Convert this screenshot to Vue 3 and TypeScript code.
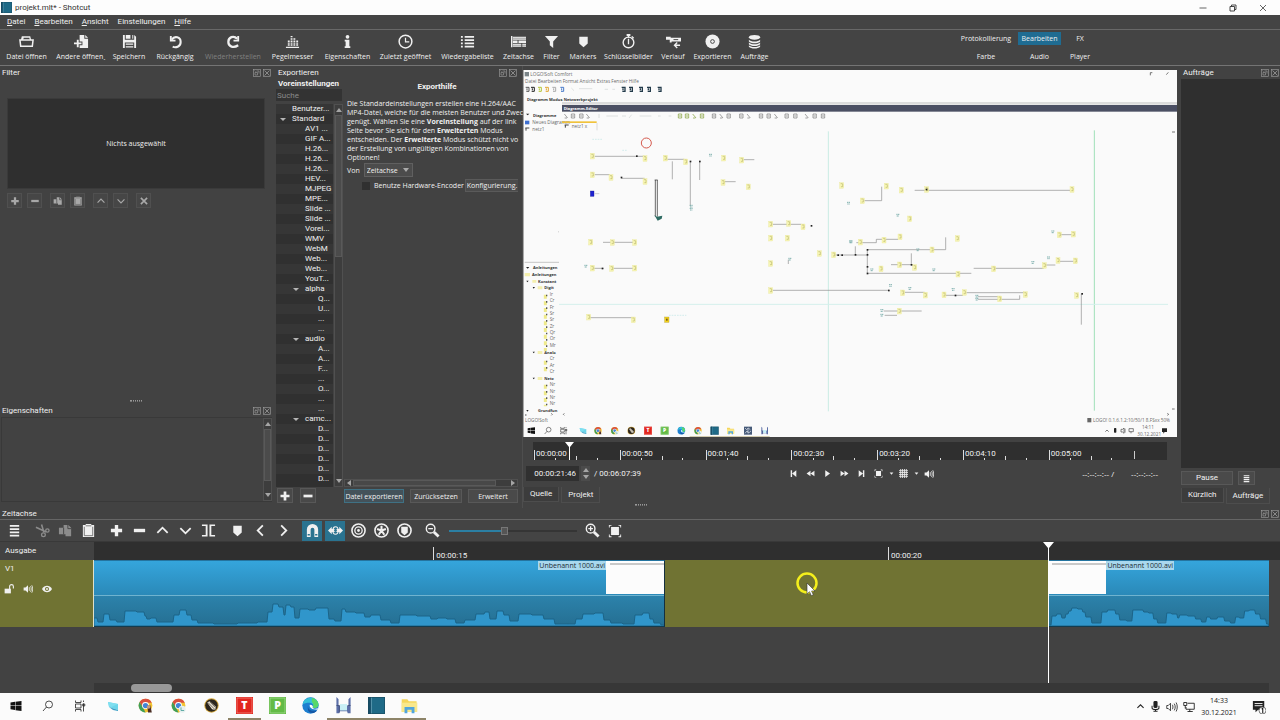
<script setup lang="ts">
import { h, ref } from 'vue'

type Shape = [kind: 'box' | 'faint' | 'line' | 'dot' | 'label', ...nums: number[]]

const glyphs: Record<string, string> = {
  open: '<path d="M3 2.500h9l1 4h-1.500l-.5-2.500H5L4.500 6.500H2z"/><path d="M1 6.500h14l-.8 6.500H1.800z" fill="none" stroke="currentColor" stroke-width="1.600"/>',
  openOther: '<path d="M6 1h5v4h4v10H6v-3h3V8H6z"/><path d="M12 1l3 3h-3z"/><path d="M0 9h3V6h2v3h3v2H5v3H3v-3H0z"/>',
  save: '<path d="M1 1h2v5h10V1l2 2v12h-2V9H3v6H1zM4 1h5v4H4zM11 1h1v4h-1zM4 10h8v1.500H4zM4 13h8v1.500H4z"/>',
  undo: '<path d="M3 2v5h5" fill="none" stroke="currentColor" stroke-width="2"/><path d="M4 6C7 1.500 13.500 3 13.500 8.500S8 15 5 13.500" fill="none" stroke="currentColor" stroke-width="2.200"/>',
  redo: '<path d="M13 2v5H8" fill="none" stroke="currentColor" stroke-width="2"/><path d="M12 5C8 1 2.500 3.500 2.500 8.500S8 15.500 13 12" fill="none" stroke="currentColor" stroke-width="2.400"/>',
  meter: '<path d="M3 7h2v1.500H3zM3 9h2v1.500H3zM3 11h2v1.500H3zM6 2h2v1.500H6zM6 4.500h2V6H6zM6 7h2v1.500H6zM6 9h2v1.500H6zM6 11h2v1.500H6zM9 4.500h2V6H9zM9 7h2v1.500H9zM9 9h2v1.500H9zM9 11h2v1.500H9zM12 7h2v1.500h-2zM12 9h2v1.500h-2zM12 11h2v1.500h-2zM1 13.500h14V15H1z"/>',
  info: '<circle cx="8" cy="3" r="2"/><path d="M5 6h5v7h1v2H5v-2h1V8H5z"/>',
  clock: '<circle cx="8" cy="8" r="6.800" fill="none" stroke="currentColor" stroke-width="1.600"/><path d="M8 4v4.500h4" fill="none" stroke="currentColor" stroke-width="1.300"/>',
  list: '<path d="M1 2h2v2H1zM5 2h10v2H5zM1 5.500h2v2H1zM5 5.500h10v2H5zM1 9h2v2H1zM5 9h10v2H5zM1 12.500h2v2H1zM5 12.500h10v2H5z"/>',
  timeline: '<path d="M0 2h1.500v12H0zM2 3h14v3H2zM2 7h5v2.500H2zM8 7h8v2.500H8zM2 10.500h9v3H2zM12 10.500h4v3h-4z"/><path d="M2 4.500h14M2 12h14" stroke="#444" stroke-width=".5"/>',
  filter: '<path d="M1 2h14L9.800 8v7L6.200 12V8z"/>',
  marker: '<path d="M3.500 3h9v7L8 14 3.500 10z"/>',
  stopwatch: '<circle cx="8" cy="9" r="5.700" fill="none" stroke="currentColor" stroke-width="1.500"/><path d="M6 0h4v2H6zM7.300 2h1.400v2H7.300zM12 2l2 2-1 1-2-2zM7.300 5h1.400v6H7.300z"/>',
  history: '<path d="M0 3h5v1h11v4H6v1H4V6H0z"/><path d="M8 5.500h5v1H8z" fill="#444"/><path d="M15 12h-5M12 9l-3 3 3 3" fill="none" stroke="currentColor" stroke-width="1.400"/>',
  disc: '<circle cx="8" cy="8" r="7.500"/><circle cx="8" cy="8" r="2" fill="none" stroke="#444" stroke-width="1"/>',
  jobs: '<ellipse cx="8" cy="3.500" rx="6" ry="2.500"/><path d="M2 6c2 2.500 10 2.500 12 0v2c-2 2.500-10 2.500-12 0zM2 9c2 2.500 10 2.500 12 0v2c-2 2.500-10 2.500-12 0zM2 12c2 2.500 10 2.500 12 0v1.500c-2 2.500-10 2.500-12 0z"/>',
  plus: '<path d="M6.200 2h3.600v4.200H14v3.600H9.800V14H6.200V9.800H2V6.200h4.200z"/>',
  minus: '<path d="M2 6.200h12v3.600H2z"/>',
  copy: '<path d="M1 5h5V2h5l3 3v9H8v-2H1z"/><path d="M10.500 2v4H14M6 5v7" fill="none" stroke="#444" stroke-width="1"/>',
  paste: '<path d="M2 2h3V1h6v1h3v13H2z"/><path d="M3.500 4v9.500h9V4" fill="none" stroke="#555" stroke-width=".8"/><path d="M5 3h6" stroke="#555" stroke-width=".8"/>',
  up: '<path d="M2.500 10.500L8 5l5.500 5.500" fill="none" stroke="currentColor" stroke-width="1.900"/>',
  down: '<path d="M2.500 5.500L8 11l5.500-5.500" fill="none" stroke="currentColor" stroke-width="1.900"/>',
  left: '<path d="M10.500 2.500L5 8l5.500 5.500" fill="none" stroke="currentColor" stroke-width="1.900"/>',
  right: '<path d="M5.500 2.500L11 8l-5.500 5.500" fill="none" stroke="currentColor" stroke-width="1.900"/>',
  cross: '<path d="M3 3l10 10M13 3L3 13" stroke="currentColor" stroke-width="2.600"/>',
  menu: '<path d="M3 2h10v2H3zM3 5.500h10v2H3zM3 9h10v2H3zM3 12.500h10v2H3z"/>',
  cut: '<path d="M1 4.500l11 5M7 1.500l2.500 8.500" fill="none" stroke="currentColor" stroke-width="1.700"/><circle cx="9" cy="12.500" r="2" fill="none" stroke="currentColor" stroke-width="1.400"/><circle cx="13.200" cy="8" r="1.800" fill="none" stroke="currentColor" stroke-width="1.400"/>',
  split: '<path d="M1 1.500h6v13H1v-1.800h4V3.300H1zM15 1.500H9v13h6v-1.800h-4V3.300h4z"/>',
  magnet: '<path d="M2 15V7a6 6 0 0112 0v8h-4V7a2 2 0 00-4 0v8z"/><path d="M2.800 12.500h2.400M10.800 12.500h2.400" stroke="#2a7390" stroke-width="1.400"/>',
  scrub: '<path d="M0 8l4-4v2.500h8V4l4 4-4 4V9.500H4V12z"/><ellipse cx="8" cy="8" rx="2.800" ry="4" fill="none" stroke="currentColor" stroke-width="1.200"/><circle cx="8" cy="8" r="1.500" fill="#2a7390"/>',
  ripple: '<circle cx="8" cy="8" r="7" fill="none" stroke="currentColor" stroke-width="1.700"/><circle cx="8" cy="8" r="3.900" fill="none" stroke="currentColor" stroke-width="1.400"/><circle cx="8" cy="8" r="1.500"/>',
  rippleAll: '<circle cx="8" cy="8" r="7" fill="none" stroke="currentColor" stroke-width="1.700"/><path d="M8 8V3M8 8l-4.700-1.500M8 8l4.700-1.500M8 8l-3 4.500M8 8l3 4.500" stroke="currentColor" stroke-width="2.200"/>',
  rippleMark: '<circle cx="8" cy="8" r="7" fill="none" stroke="currentColor" stroke-width="1.700"/><path d="M4.500 4h7v6L8 13l-3.500-3z"/>',
  zoomOut: '<circle cx="6" cy="6" r="4.600" fill="none" stroke="currentColor" stroke-width="1.500"/><path d="M3.500 5.300h5v1.400h-5z"/><path d="M9.500 9.500l5 5" stroke="currentColor" stroke-width="3"/>',
  zoomIn: '<circle cx="6" cy="6" r="4.600" fill="none" stroke="currentColor" stroke-width="1.500"/><path d="M3.500 5.300h5v1.400h-5zM5.300 3.500h1.400v5H5.300z"/><path d="M9.500 9.500l5 5" stroke="currentColor" stroke-width="3"/>',
  fit: '<path d="M3.500 3.500h9v9h-9zM1 1h3v1H2v2H1zM15 1h-3v1h2v2h1zM1 15h3v-1H2v-2H1zM15 15h-3v-1h2v-2h1z"/>',
  skipBack: '<path d="M3 2h2.500v12H3zM13 2v12L5.500 8z"/>',
  rewind: '<path d="M8 3v10L1 8zM15 3v10L8 8z"/>',
  play: '<path d="M4 2l8.500 6L4 14z"/>',
  forward: '<path d="M1 3v10l7-5zM8 3v10l7-5z"/>',
  skipNext: '<path d="M10.500 2H13v12h-2.500zM3 2v12l7.500-6z"/>',
  caret: '<path d="M2 5h12l-6 7z"/>',
  grid: '<path d="M3 0v16M6.300 0v16M9.700 0v16M13 0v16M0 3h16M0 6.300h16M0 9.700h16M0 13h16" stroke="currentColor" stroke-width="1.500"/>',
  speaker: '<path d="M1 5.500h3L8 2v12l-4-3.500H1z"/><path d="M10 5v6M12 3.500c1.500 2 1.500 7 0 9M14 2c2 3 2 9 0 12" fill="none" stroke="currentColor" stroke-width="1.300"/>',
  lock: '<path d="M1 7.500h10V15H1z"/><path d="M9 8V4a3 3 0 016 0v3" fill="none" stroke="currentColor" stroke-width="1.800"/>',
  eye: '<path d="M0 8c4-7 12-7 16 0-4 7-12 7-16 0z"/><circle cx="8" cy="8" r="3.200" fill="#70732f"/><circle cx="8" cy="8" r="1.600"/>',
  float: '<rect x="1" y="1" width="14" height="14" fill="none" stroke="currentColor" stroke-width="1.200"/><path d="M4 7h5v5H4zM7 4h5v5M3 3l2 2" fill="none" stroke="currentColor" stroke-width="1.200"/>',
  close: '<rect x="1" y="1" width="14" height="14" fill="none" stroke="currentColor" stroke-width="1.200"/><path d="M3 3l10 10M13 3L3 13" stroke="currentColor" stroke-width="1.500"/>',
  winMin: '<path d="M1 8h14" stroke="currentColor" stroke-width="1.500"/>',
  winMax: '<path d="M2 5h9v9H2zM5 5V2h9v9h-3" fill="none" stroke="currentColor" stroke-width="1.800"/>',
  winClose: '<path d="M2 2l12 12M14 2L2 14" stroke="currentColor" stroke-width="1.500"/>',
  mic: '<rect x="5" y="0" width="6" height="10" rx="2"/><path d="M3 7v3c0 3 10 3 10 0V7M8 12v3M5 15h6" fill="none" stroke="currentColor" stroke-width="1.500"/>',
  sound: '<path d="M1 6h2l3-3v10l-3-3H1z" fill="none" stroke="currentColor" stroke-width="1.100"/><path d="M8.500 5c1 2 1 4 0 6M11 3.500c1.700 3 1.700 6 0 9M13.500 2c2 4 2 8 0 12" fill="none" stroke="currentColor" stroke-width="1.100"/>',
  net: '<path d="M6 3h9v8H4V8M9 11v3M6 14h7" fill="none" stroke="currentColor" stroke-width="1.200"/><path d="M1 2h4v4H1zM3 6v4" fill="none" stroke="currentColor" stroke-width="1.200"/>',
  note: '<path d="M1 1h13v10H7l-3 3v-3H1z"/><path d="M3 4h9M3 6.500h9" stroke="#fff" stroke-width="1"/><circle cx="12" cy="12" r="4" fill="#fff" stroke="#444" stroke-width=".8"/><path d="M11 10.500l1.300-1V15" fill="none" stroke="#111" stroke-width="1.200"/>',
}

function Glyph(props: { name: string; size?: number }) {
  const s = props.size ?? 12
  return h('svg', { viewBox: '0 0 16 16', width: s, height: s, fill: 'currentColor', 'aria-hidden': 'true', innerHTML: glyphs[props.name] })
}
Glyph.props = ['name', 'size']

const chrome = '<circle cx="12" cy="12" r="11" fill="#f3c331"/><path d="M2.500 6.500A11 11 0 0122 7.500H12L7.300 14.500z" fill="#d9503f"/><path d="M2.500 6.500L9 17l3 6A11 11 0 012.500 6.500z" fill="#3f9e5a"/><circle cx="12" cy="12" r="5.500" fill="#fff"/><circle cx="12" cy="12" r="4.200" fill="#4285d8"/>'
const apps: Record<string, string> = {
  start: '<path d="M1 5l9-1.500V11H1zM11 3.300L23 2v9H11zM1 12h9v8L1 18.500zM11 12h12v10l-12-1.500z" fill="#111"/>',
  search: '<circle cx="14" cy="9" r="7" fill="none" stroke="#222" stroke-width="1.600"/><path d="M9 14l-7 8" stroke="#222" stroke-width="1.600"/>',
  tasks: '<path d="M3 1v4h11V1M3 23v-4h11v4M3 8h11v8H3zM19 1v3M19 7v16M17.500 8h4v4h-4z" fill="none" stroke="#222" stroke-width="1.600"/>',
  desktop: '<path d="M2 4l20 4v12L4 14z" fill="#6bd5ea"/><path d="M4 14l18 6v2L12 20z" fill="#3a9fc6"/><path d="M2 4l20 4-13 6-5-1z" fill="#7fdff0"/>',
  chromeA: chrome + '<path d="M15 12h5l2 11h-6z" fill="#4b2f25"/><circle cx="17" cy="14" r="3" fill="#c49a80"/>',
  chromeB: chrome + '<circle cx="18" cy="18" r="5.500" fill="#e6f0ef"/><path d="M16 15v5h5" stroke="#58a7a2" stroke-width="1.500" fill="none"/>',
  pen: '<circle cx="12" cy="12" r="11.500" fill="#d3a63a"/><circle cx="12" cy="12" r="10" fill="#2b251c"/><path d="M5 7l4-2 10 9-1 5-5-1z" fill="#f0e8d8"/><path d="M6 7l12 12M9 6l9 9" stroke="#2b251c"/>',
  text: '<path d="M0 0h24v24H0z" fill="#e2261f"/><path d="M1.500 1.500h21v21h-21z" fill="none" stroke="#ef8a80"/><text x="12" y="17.500" text-anchor="middle" font-family="Open Sans, sans-serif" font-weight="800" font-size="15" fill="#fff">T</text>',
  plan: '<path d="M0 0h24v24H0z" fill="#63bb46"/><path d="M1.500 1.500h21v21h-21z" fill="none" stroke="#a8dc96"/><text x="12" y="17.500" text-anchor="middle" font-family="Open Sans, sans-serif" font-weight="800" font-size="15" fill="#fff">P</text>',
  edge: '<circle cx="12" cy="12" r="11.500" fill="#1d7fd0"/><path d="M1 10C3-2 21-2 23.500 10c0 5-4 6-8 5 2-4-1-7-5-7-4 0-8 1-9.500 2z" fill="#35c1d8"/><path d="M14 1c8 2 10 8 9 11-1 4-6 4-8 3 2-4 1-6-1-8z" fill="#58d86a"/><path d="M9 11c-2 6 3 10 12 8-5 7-16 4-12-8z" fill="#1557a5"/><path d="M11 11c-1 4 3 7 11 7l1-2c-3 1-6 1-8-1 1-2 0-4-4-4z" fill="#fff"/>',
  clip: '<path d="M2 0l3 3v9h14V3l3-3v23h-4l-1-3H7l-1 3H2z" fill="#5c6fa8"/><path d="M7 10h10v9H7z" fill="#c8eff5"/><path d="M2 12h4v10M22 12h-4" stroke="#39456f" fill="none"/>',
  shotcut: '<path d="M0 0h24v24H0z" fill="#1f6a87"/><path d="M0 0h4v24H0z" fill="#174e68"/><path d="M5 0v24" stroke="#6ea6bb"/><path d="M.5.5h23v23H.5z" fill="none" stroke="#19485a"/>',
  files: '<path d="M1 3h8l2 3h11v15H1z" fill="#f5d65b"/><path d="M1 8h22v13H1z" fill="#f9e88b"/><path d="M5 14h14v9h-4v-5H9v5H5z" fill="#52a5dc"/>',
  logo: '<path d="M0 0h24v24H0z" fill="#465a78"/><path d="M3 4l5 5 5-5 6 5M3 20l6-7 5 6 7-6M12 4v16" stroke="#e8edf4" stroke-width="2" fill="none"/>',
}

const menus = ['Datei', 'Bearbeiten', 'Ansicht', 'Einstellungen', 'Hilfe']
const noMnemonic = 'Einstellungen'

const tools = [
  { icon: 'open', label: 'Datei öffnen' },
  { icon: 'openOther', label: 'Andere öffnen˯' },
  { icon: 'save', label: 'Speichern' },
  { icon: 'undo', label: 'Rückgängig' },
  { icon: 'redo', label: 'Wiederherstellen', off: true },
  { icon: 'meter', label: 'Pegelmesser' },
  { icon: 'info', label: 'Eigenschaften' },
  { icon: 'clock', label: 'Zuletzt geöffnet' },
  { icon: 'list', label: 'Wiedergabeliste' },
  { icon: 'timeline', label: 'Zeitachse' },
  { icon: 'filter', label: 'Filter' },
  { icon: 'marker', label: 'Markers' },
  { icon: 'stopwatch', label: 'Schlüsselbilder' },
  { icon: 'history', label: 'Verlauf' },
  { icon: 'disc', label: 'Exportieren' },
  { icon: 'jobs', label: 'Aufträge' },
]
const layouts = ['Protokollierung', 'Bearbeiten', 'FX', 'Farbe', 'Audio', 'Player']
const activeLayout = ref('Bearbeiten')

const filterGroups = [['plus', 'minus'], ['copy', 'paste'], ['up', 'down'], ['cross']]

const preset = (level: number, ...names: string[]) => names.map((name) => ({ level, name, open: false }))
const group = (level: number, name: string) => ({ level, name, open: true })
const presets = [
  ...preset(0, 'Benutzer...'),
  group(0, 'Standard'),
  ...preset(1, 'AV1 ...', 'GIF A...', 'H.26...', 'H.26...', 'H.26...', 'HEV...', 'MJPEG', 'MPE...', 'Slide ...', 'Slide ...', 'Vorei...', 'WMV', 'WebM', 'Web...', 'Web...', 'YouT...'),
  group(1, 'alpha'),
  ...preset(2, 'Q...', 'U...', '...', '...'),
  group(1, 'audio'),
  ...preset(2, 'A...', 'A...', 'F...', '...', 'O...', '...', '...'),
  group(1, 'camc...'),
  ...preset(2, 'D...', 'D...', 'D...', 'D...', 'D...', 'D...'),
]

const marks = ['00:00:00', '00:00:50', '00:01:40', '00:02:30', '00:03:20', '00:04:10', '00:05:00']
const position = ref('00:00:21:46')
const zoom = ref(43)
const hardware = ref(false)

const transport = ['skipBack', 'rewind', 'play', 'forward', 'skipNext', 'fit']

const editTools = [
  ['menu'],
  ['cut', 'copy', 'paste'],
  ['plus', 'minus', 'up', 'down', 'split'],
  ['marker', 'left', 'right'],
  ['magnet', 'scrub', 'ripple', 'rippleAll', 'rippleMark'],
  ['zoomOut'],
]
const toggled = ['magnet', 'scrub']
const disabled = ['cut', 'copy']

/* Audio peaks: x and height in pixels above the clip's lower edge. */
const peaksA = [0, 8, 5, 4, 13, 12, 17, 6, 26, 4, 34, 15, 49, 14, 50, 10, 53, 7, 59, 8, 65, 4, 76, 4, 82, 11, 88, 16, 95, 11, 99, 6, 107, 3, 130, 2, 155, 3, 170, 4, 176, 14, 180, 22, 188, 19, 190, 11, 192, 21, 199, 19, 201, 8, 208, 17, 219, 16, 223, 18, 233, 18, 234, 7, 246, 5, 247, 17, 255, 14, 267, 13, 273, 9, 279, 11, 292, 6, 300, 3, 310, 11, 333, 10, 339, 7, 346, 8, 358, 7, 364, 3, 375, 6, 387, 12, 393, 14, 397, 7, 406, 15, 412, 11, 418, 5, 429, 12, 445, 11, 453, 7, 466, 2, 480, 2, 482, 7, 493, 12, 507, 13, 511, 6, 520, 3, 536, 2, 543, 11, 553, 13, 556, 7, 561, 3, 570, 1]
const peaksB = [0, 1, 5, 10, 11, 12, 15, 8, 18, 12, 21, 15, 24, 18, 33, 17, 35, 14, 39, 9, 46, 3, 52, 3, 54, 14, 63, 16, 70, 12, 72, 6, 83, 5, 85, 16, 94, 16, 96, 14, 103, 13, 106, 7, 111, 3, 117, 3, 118, 13, 128, 12, 129, 8, 132, 11, 145, 10, 148, 7, 157, 4, 158, 9, 165, 7, 172, 9, 179, 5, 185, 3, 188, 9, 194, 8, 197, 15, 205, 16, 208, 12, 215, 7, 221, 2]
function wave(peaks: number[]) {
  let d = `M0 30V${30 - peaks[1]}`
  for (let i = 2; i < peaks.length; i += 2) {
    const mid = Math.round((peaks[i - 2] + peaks[i]) / 2)
    d += `H${mid}L${mid + 1} ${30 - peaks[i + 1]}`
  }
  return `${d}H${peaks[peaks.length - 2]}V30Z`
}

/* Circuit shown in the video frame. */
const circuit: Shape[] = [
  ['box', 208, 264], ['box', 366, 271], ['line', 215, 265, 365, 265], ['faint', 305, 250], ['dot', 341, 264],
  ['box', 208, 320], ['box', 264, 328], ['line', 215, 320, 260, 320], ['dot', 295, 328], ['line', 295, 331, 365, 331], ['box', 366, 340],
  ['line', 448, 280, 448, 334], ['box', 427, 270], ['line', 433, 274, 484, 274], ['box', 488, 281], ['dot', 502, 280], ['line', 502, 280, 502, 415], ['label', 500, 415], ['label', 500, 424], ['dot', 530, 280], ['line', 530, 280, 530, 336],
  ['label', 558, 262], ['box', 602, 270], ['box', 656, 276], ['line', 662, 275, 694, 275], ['box', 600, 343], ['line', 606, 341, 638, 341], ['box', 676, 356],
  ['box', 203, 522], ['box', 268, 523], ['box', 335, 523], ['line', 240, 523, 338, 523],
  ['box', 743, 468], ['box', 797, 466], ['line', 750, 469, 835, 469], ['box', 840, 476], ['dot', 865, 473], ['box', 743, 510], ['box', 793, 510],
  ['box', 956, 352], ['label', 972, 406], ['label', 978, 522], ['box', 889, 556], ['box', 932, 560], ['line', 932, 561, 1034, 561], ['dot', 945, 561], ['dot', 957, 561],
  ['label', 184, 595], ['box', 208, 600], ['line', 213, 601, 242, 601], ['dot', 238, 601], ['box', 266, 601], ['box', 335, 600], ['line', 270, 601, 335, 601],
  ['box', 743, 586], ['label', 796, 574], ['line', 796, 575, 796, 588], ['box', 743, 667], ['line', 750, 667, 1097, 667], ['dot', 1097, 667], ['label', 1098, 653],
  ['box', 197, 747], ['line', 200, 749, 328, 749], ['box', 331, 755],
  ['box', 1018, 398], ['line', 1024, 398, 1076, 398], ['line', 1076, 356, 1076, 398], ['box', 1090, 354], ['box', 1135, 366],
  ['line', 1175, 367, 1645, 367], ['box', 1211, 364], ['dot', 1210, 364], ['box', 1647, 364],
  ['label', 1120, 442], ['box', 1160, 452], ['label', 980, 522], ['box', 1012, 522], ['line', 1000, 524, 1060, 524], ['line', 1060, 514, 1060, 524], ['line', 1060, 514, 1125, 514], ['box', 1083, 516], ['box', 1131, 506],
  ['line', 997, 535, 997, 560], ['dot', 997, 560], ['dot', 1033, 545], ['line', 1033, 545, 1268, 545], ['line', 1268, 508, 1268, 545], ['line', 1033, 545, 1033, 616], ['dot', 1033, 560], ['dot', 1033, 596], ['dot', 1033, 616], ['line', 1033, 616, 1345, 616],
  ['label', 1180, 546], ['box', 1227, 545], ['box', 1303, 511], ['label', 1042, 606], ['box', 1074, 602], ['box', 1130, 590], ['line', 1104, 590, 1168, 590], ['line', 1165, 556, 1165, 590], ['dot', 1165, 590], ['box', 1175, 598], ['label', 1228, 606], ['box', 1305, 618],
  ['line', 1352, 601, 1562, 601], ['box', 1412, 602], ['label', 1525, 584], ['box', 1564, 592], ['line', 1568, 591, 1597, 591], ['label', 1572, 570], ['box', 1605, 577], ['line', 1610, 580, 1652, 580], ['box', 1657, 578],
  ['label', 1585, 492], ['box', 1609, 500], ['box', 1651, 498], ['line', 1614, 500, 1650, 500],
  ['box', 1139, 674], ['label', 1156, 662], ['line', 1145, 673, 1205, 673], ['box', 1207, 681], ['box', 1263, 680], ['line', 1267, 682, 1320, 682], ['dot', 1297, 682], ['label', 1286, 665], ['box', 1324, 673], ['line', 1330, 674, 1503, 674], ['box', 1507, 679],
  ['label', 1357, 685], ['label', 1357, 694], ['line', 1365, 686, 1425, 686], ['line', 1365, 694, 1490, 694], ['line', 1490, 682, 1490, 694], ['box', 1430, 692],
  ['box', 1661, 682], ['dot', 1677, 677], ['line', 1675, 677, 1675, 770], ['label', 1072, 728], ['label', 1072, 742], ['box', 1129, 729], ['line', 1082, 729, 1196, 729], ['line', 1085, 742, 1122, 742],
]
const shapesOf = (kind: Shape[0]) => circuit.filter((s) => s[0] === kind).map((s) => s.slice(1) as number[])

const treeRows = [
  { x: 45, y: 645, t: 'Konstant', b: true }, { x: 64, y: 664, t: 'Digit', b: true },
  ...['I', 'C', 'F', 'S', 'S', 'Z', 'Q', 'O', 'M'].map((t, i) => ({ x: 80, y: 684 + i * 19, t: t + 'r', b: false })),
  { x: 64, y: 858, t: 'Analo', b: true },
  ...['C', 'A', 'C'].map((t, i) => ({ x: 80, y: 877 + i * 19, t: t + 'r', b: false })),
  { x: 64, y: 936, t: 'Netz', b: true },
  ...['N', 'N', 'N', 'N'].map((t, i) => ({ x: 80, y: 955 + i * 19, t: t + 'r', b: false })),
  { x: 45, y: 1032, t: 'Grundfun', b: true },
]
const frameTools = [8, 24, 45, 66, 88, 112, 296, 318, 348, 372, 404]
const diagramTools = [124, 145, 170, 190, 466, 487, 509, 532, 568, 590, 612, 650, 672, 709, 732, 754, 786, 812, 846, 870, 895]
const frameApps = [
  ['start', 25], ['search', 75], ['tasks', 122], ['desktop', 180], ['chromeA', 225], ['chromeB', 275], ['pen', 325], ['text', 375],
  ['plan', 425], ['edge', 475], ['chromeB', 525], ['shotcut', 575], ['files', 623], ['logo', 675], ['clip', 725],
] as [string, number][]

const taskbar = [
  { id: 'start', label: 'Start' }, { id: 'search', label: 'Suchen' }, { id: 'tasks', label: 'Taskansicht' }, { id: 'desktop', label: 'Desktop' },
  { id: 'chromeA', label: 'Chrome' }, { id: 'chromeB', label: 'Chrome 2' }, { id: 'pen', label: 'Zeichnen' }, { id: 'text', label: 'TextMaker', run: true },
  { id: 'plan', label: 'PlanMaker' }, { id: 'edge', label: 'Edge' }, { id: 'clip', label: 'Aufnahme', run: true }, { id: 'shotcut', label: 'Shotcut', run: true },
  { id: 'files', label: 'Explorer', run: true },
]
</script>

<template>
  <div class="screen">
    <header class="titlebar">
      <svg class="app-icon" viewBox="0 0 24 24" v-html="apps.shotcut"></svg>
      <h1>projekt.mlt* - Shotcut</h1>
      <div class="win-controls">
        <button aria-label="Minimieren"><Glyph name="winMin" :size="8" /></button>
        <button aria-label="Wiederherstellen"><Glyph name="winMax" :size="8" /></button>
        <button aria-label="Schließen"><Glyph name="winClose" :size="8" /></button>
      </div>
    </header>

    <nav class="menubar">
      <button v-for="m in menus" :key="m">
        <template v-if="m === noMnemonic">{{ m }}</template>
        <template v-else><u>{{ m[0] }}</u>{{ m.slice(1) }}</template>
      </button>
    </nav>

    <div class="toolbar">
      <div class="tools">
        <button v-for="t in tools" :key="t.label" :disabled="t.off">
          <Glyph :name="t.icon" :size="15" /><span>{{ t.label }}</span>
        </button>
      </div>
      <div class="layouts">
        <button v-for="l in layouts" :key="l" :class="{ active: l === activeLayout }" @click="activeLayout = l">{{ l }}</button>
      </div>
    </div>

    <main class="docks">
      <div class="dock-left">
        <section class="filter-dock">
          <div class="dock-title"><h2>Filter</h2><Glyph name="float" :size="8" /><Glyph name="close" :size="8" /></div>
          <div class="filter-empty">Nichts ausgewählt</div>
          <div class="filter-buttons">
            <div v-for="(g, i) in filterGroups" :key="i">
              <button v-for="b in g" :key="b" :aria-label="b"><Glyph :name="b" :size="10" /></button>
            </div>
          </div>
        </section>
        <i class="grip"></i>
        <section class="props-dock">
          <div class="dock-title"><h2>Eigenschaften</h2><Glyph name="float" :size="8" /><Glyph name="close" :size="8" /></div>
          <div class="props-body">
            <div class="vscroll"><i class="arrow up"></i><b></b><i class="arrow down"></i></div>
          </div>
        </section>
      </div>

      <section class="export-dock">
        <div class="dock-title"><h2>Exportieren</h2><Glyph name="float" :size="8" /><Glyph name="close" :size="8" /></div>
        <div class="export-body">
          <div class="presets">
            <h3>Voreinstellungen</h3>
            <input type="search" placeholder="Suche" aria-label="Suche" />
            <div class="tree">
              <ul>
                <li v-for="(p, i) in presets" :key="i" :class="['lv' + p.level, { open: p.open }]"><i></i><span>{{ p.name }}</span></li>
              </ul>
              <div class="vscroll short"><i class="arrow up"></i><b></b><i class="arrow down"></i></div>
            </div>
            <div class="preset-buttons">
              <button aria-label="Hinzufügen"><Glyph name="plus" :size="12" /></button>
              <button aria-label="Entfernen"><Glyph name="minus" :size="12" /></button>
            </div>
          </div>
          <div class="export-main">
            <h3>Exporthilfe</h3>
            <p>
              Die Standardeinstellungen erstellen eine H.264/AAC<br />
              MP4-Datei, welche für die meisten Benutzer und Zwec<br />
              genügt. Wählen Sie eine <b>Voreinstellung</b> auf der link<br />
              Seite bevor Sie sich für den <b>Erweiterten</b> Modus<br />
              entscheiden. Der <b>Erweiterte</b> Modus schützt nicht vo<br />
              der Erstellung von ungültigen Kombinationen von<br />
              Optionen!
            </p>
            <div class="from-row">
              <label for="from">Von</label>
              <span class="select"><select id="from"><option>Zeitachse</option></select></span>
            </div>
            <div class="hw-row">
              <input id="hw" v-model="hardware" type="checkbox" />
              <label for="hw">Benutze Hardware-Encoder</label>
              <button>Konfigurierung.</button>
            </div>
            <div class="hscroll"><i class="arrow prev"></i><b></b><i class="arrow next"></i></div>
            <div class="export-buttons">
              <button class="primary">Datei exportieren</button>
              <button>Zurücksetzen</button>
              <button>Erweitert</button>
            </div>
          </div>
        </div>
      </section>

      <section class="player">
        <div class="frame">
          <svg viewBox="0 0 1962 1101" preserveAspectRatio="xMidYMid slice">
            <rect width="1962" height="1101" fill="#fafafa" />
            <g transform="translate(0 -6)">
              <path d="M1 6v1101" stroke="#999" stroke-width="3" />
              <rect x="5" y="12" width="13" height="13" fill="#7a8488" />
              <g class="tiny">
                <text x="22" y="24">LOGO!Soft Comfort</text>
                <text x="6" y="46">Datei Bearbeiten Format Ansicht Extras Fenster Hilfe</text>
                <text class="b" x="12" y="99">Diagramm Modus</text>
                <text class="b" x="122" y="99">Netzwerkprojekt</text>
                <text class="b" x="30" y="146">Diagramme</text>
                <text x="28" y="169">Neues Diagramm</text>
                <text x="28" y="188">netz1</text>
                <text x="146" y="180">netz1 x</text>
                <text class="b" x="30" y="602">Anleitungen</text>
                <text class="b" x="27" y="625">Anleitungen</text>
                <text v-for="(r, i) in treeRows" :key="i" :x="r.x" :y="r.y" :class="{ b: r.b }">{{ r.t }}</text>
                <text x="6" y="1062">LOGO!Soft</text>
                <text x="1710" y="1061">LOGO! 0.1.6.1.2:10/50/1 8.FSxx 50%</text>
              </g>
              <path d="M67 680V850M67 878V915M67 950V1015" stroke="#efea8c" stroke-width="9" stroke-dasharray="12 8" />
              <path d="M71 680V850M71 878V915M71 950V1015" stroke="#555" stroke-width="4" stroke-dasharray="5 14" />
              <path d="M9 137l5 5 5-5M9 597l5 5 5-5M10 638h7l-4 5zM29 657h7l-4 5zM29 851h7l-4 5zM29 929h7l-4 5zM10 1026h7l-4 5z" fill="#222" />
              <path d="M5 615h16v10H5zM28 636h12v8H28zM44 655h14v9H44zM44 849h14v9H44zM44 927h14v9H44z" fill="#f4efad" />
              <path d="M5 583h103M5 37h1" stroke="#aaa" stroke-width="2" />
              <rect x="117" y="102" width="1845" height="8" fill="#dcdcdc" />
              <rect x="117" y="111" width="1845" height="20" fill="#4b4f63" />
              <text class="tiny b light" x="122" y="125">Diagramm-Editor</text>
              <rect x="117" y="160" width="104" height="5" fill="#f0c23c" />
              <path d="M222 165v22" stroke="#ccc" stroke-width="2" />
              <rect x="6" y="158" width="13" height="11" fill="#3e6fd0" />
              <path d="M7 180h12M9 180v8M125 171h12M127 171v8" stroke="#444" stroke-width="3" />
              <g fill="none" stroke="#555" stroke-width="2">
                <g v-for="(x, i) in frameTools" :key="'f' + x">
                  <path :d="`M${x} 58h10v12h-8M${x + 4} 61v6`" :stroke="i < 6 ? ['#555', '#222', '#b4c437', '#e0a531', '#aaa', '#4478c8'][i] : '#223a4a'" :stroke-width="i < 6 ? 3 : 4" />
                </g>
                <g v-for="(x, i) in diagramTools" :key="'d' + x">
                  <path :d="i % 3 ? `M${x} 138h10v12h-10zM${x + 2} 144h6` : `M${x} 138l10 12M${x + 1} 150h7`" :stroke="i > 3 && i < 8 ? '#7c9a2e' : '#777'" />
                </g>
                <path d="M145 60l8 8M168 62h40M245 64h10M268 64h8M228 138v12M250 144h35M297 144h12M318 150l8-10M350 144h35M405 144h8M437 144h8" stroke="#d0d5d5" />
              </g>
              <path d="M916 190V1030" stroke="#c9ece4" stroke-width="3" />
              <path d="M1714 187V1028" stroke="#9fe0b8" stroke-width="3" />
              <path d="M108 709H1935" stroke="#d4f0ec" stroke-width="3" />
              <circle cx="370" cy="225" r="15" fill="none" stroke="#d55a4e" stroke-width="3" />
              <g stroke="#8c8c8c" stroke-width="2">
                <path v-for="(s, i) in shapesOf('line')" :key="i" :d="`M${s[0]} ${s[1]}L${s[2]} ${s[3]}`" />
              </g>
              <g v-for="(s, i) in shapesOf('box')" :key="'b' + i" :transform="`translate(${s[0]} ${s[1]})`">
                <rect x="-6" y="-8" width="12" height="17" fill="#f7f5b4" stroke="#e9e690" stroke-width="1" />
                <path d="M-3-5h6M-2 4h5M3-4v8" stroke="#a8a45a" stroke-width="1.500" />
              </g>
              <rect v-for="(s, i) in shapesOf('dot')" :key="'t' + i" :x="s[0] - 2" :y="s[1] - 2" width="5" height="5" fill="#222" />
              <path v-for="(s, i) in shapesOf('label')" :key="'l' + i" :d="`M${s[0]} ${s[1] - 3}h9M${s[0] + 1} ${s[1] + 2}h7`" stroke="#7fb0ae" stroke-width="3" stroke-dasharray="4 1" />
              <path d="M298 247h14M208 214h32M438 742h52" stroke="#bfe5e6" stroke-width="2" stroke-dasharray="5 3" />
              <rect x="202" y="369" width="11" height="16" fill="#1e22d0" stroke="#14158a" />
              <path d="M215 377h14" stroke="#777" stroke-width="1" />
              <path d="M395 336h9M397 336V446M403 336V446" stroke="#222" stroke-width="2" />
              <path d="M394 441l8 5 16-3-2 9-12 6z" fill="#2d6b62" />
              <rect x="425" y="747" width="13" height="16" fill="#f3d21d" stroke="#a58f20" />
              <rect x="429" y="752" width="5" height="6" fill="#765a18" />
              <path d="M1882 22v-8h6M1930 20l6-7M1947 192h9M1947 1023h8M1933 1036l4 3-4 3M108 490l-1 1M10 1038l-3 3 3 3M124 1036l-3 3 3 3M85 1036l3 3-3 3" stroke="#333" stroke-width="2" fill="none" />
              <rect x="1693" y="1050" width="12" height="13" fill="#666" />
              <g v-for="([id, x]) in frameApps" :key="x" :transform="`translate(${x - 12} 1076)`" v-html="apps[id]"></g>
              <path d="M500 1106h240" stroke="#c9c19f" stroke-width="3" />
              <g class="tiny"><text x="1857" y="1084">14:11</text><text x="1843" y="1103">30.12.2021</text></g>
              <path d="M1747 1091l5-5 5 5" stroke="#333" fill="none" stroke-width="2" />
              <rect x="1773" y="1080" width="7" height="14" rx="2" fill="#222" />
              <path d="M1794 1084h5l4-4v16l-4-4h-5zM1806 1082v12M1818 1082h13v9h-13zM1824 1091v5" stroke="#444" fill="none" stroke-width="2" />
              <path d="M1917 1081h15v11h-7l-4 5v-5h-4z" fill="#222" />
            </g>
          </svg>
        </div>
        <div class="scrubber">
          <div v-for="m in marks" :key="m" class="mark"><span>{{ m }}</span><i></i><i></i><i></i></div>
          <div class="mark tail"><i></i></div>
          <b class="end"></b>
          <svg class="head" viewBox="0 0 9 18" width="9" height="18"><path d="M0 0h9L5 5v13H4V5z" fill="#fff" /></svg>
        </div>
        <div class="transport">
          <div class="time-now">
            <input v-model="position" aria-label="Position" />
            <span class="spin"><i class="arrow up"></i><i class="arrow down"></i></span>
            <span>/ 00:06:07:39</span>
          </div>
          <div class="transport-buttons">
            <button v-for="b in transport" :key="b" :aria-label="b"><Glyph :name="b" :size="9" /></button>
            <button class="slim" aria-label="Zoom"><Glyph name="caret" :size="5" /></button>
            <button aria-label="Raster"><Glyph name="grid" :size="9" /></button>
            <button class="slim" aria-label="Rasteroptionen"><Glyph name="caret" :size="5" /></button>
            <button aria-label="Lautstärke"><Glyph name="speaker" :size="10" /></button>
          </div>
          <div class="time-sel"><span>--:--:--:-- /</span><span>--:--:--:--</span></div>
        </div>
        <div class="tabs"><button class="back">Quelle</button><button>Projekt</button></div>
        <i class="grip"></i>
      </section>

      <section class="jobs-dock">
        <div class="dock-title"><h2>Aufträge</h2><Glyph name="float" :size="8" /><Glyph name="close" :size="8" /></div>
        <div class="jobs-list"></div>
        <div class="jobs-buttons"><button class="pause">Pause</button><button aria-label="Menü"><Glyph name="menu" :size="9" /></button></div>
        <div class="tabs"><button class="back">Kürzlich</button><button>Aufträge</button></div>
      </section>
    </main>

    <section class="timeline">
      <div class="dock-title"><h2>Zeitachse</h2><Glyph name="float" :size="8" /><Glyph name="close" :size="8" /></div>
      <div class="edit-bar">
        <div v-for="(g, i) in editTools" :key="i" class="edit-group">
          <button v-for="b in g" :key="b" :aria-label="b" :class="{ on: toggled.includes(b) }" :disabled="disabled.includes(b)"><Glyph :name="b" :size="15" /></button>
        </div>
        <input v-model="zoom" class="zoom" type="range" min="0" max="100" aria-label="Zoom" />
        <div class="edit-group">
          <button aria-label="Vergrößern"><Glyph name="zoomIn" :size="15" /></button>
          <button aria-label="Einpassen"><Glyph name="fit" :size="14" /></button>
        </div>
      </div>
      <div class="tracks">
        <div class="heads">
          <div class="output">Ausgabe</div>
          <div class="track-head">
            <span>V1</span>
            <div>
              <button aria-label="Sperren"><Glyph name="lock" :size="10" /></button>
              <button aria-label="Stumm"><Glyph name="speaker" :size="10" /></button>
              <button aria-label="Ausblenden"><Glyph name="eye" :size="10" /></button>
            </div>
          </div>
        </div>
        <div class="lanes">
          <div class="ruler"><span></span><span>00:00:15</span><span>00:00:20</span></div>
          <div class="lane">
            <div class="clip first">
              <div class="clip-top"><span>Unbenannt 1000.avi</span><i class="thumb"></i></div>
              <svg viewBox="0 0 570 30" preserveAspectRatio="none"><path :d="wave(peaksA)" /></svg>
            </div>
            <div class="blank">
              <svg class="pointer" viewBox="0 0 24 26" width="24" height="26">
                <circle cx="12" cy="11" r="9.500" fill="none" stroke="#f4ef1c" stroke-width="2.500" />
                <path d="M12 11v11l2.500-2.300 1.800 4 2-.9-1.700-3.800H20z" fill="#fff" stroke="#333" stroke-width=".6" />
              </svg>
            </div>
            <div class="clip second">
              <div class="clip-top"><i class="thumb"></i><span>Unbenannt 1000.avi</span></div>
              <svg viewBox="0 0 221 30" preserveAspectRatio="none"><path :d="wave(peaksB)" /></svg>
            </div>
            <div class="rest"></div>
          </div>
          <div class="lane-space"></div>
          <div class="lane-scroll"><b></b></div>
          <svg class="playhead" viewBox="0 0 11 141" width="11" height="141"><path d="M0 0h11L6 6v135H5V6z" fill="#fff" /></svg>
        </div>
      </div>
    </section>

    <footer class="taskbar">
      <button v-for="a in taskbar" :key="a.id" :class="{ run: a.run }" :aria-label="a.label"><svg viewBox="0 0 24 24" v-html="apps[a.id]"></svg></button>
      <div class="tray">
        <Glyph name="up" :size="9" /><Glyph name="mic" :size="11" /><Glyph name="sound" :size="12" /><Glyph name="net" :size="12" />
        <time>14:33<br />30.12.2021</time>
        <Glyph name="note" :size="14" />
      </div>
    </footer>
  </div>
</template>

<style>
html, body { background: #424242; }
body { margin: 0; }
</style>

<style scoped>
* { box-sizing: border-box; }
.screen { display: flex; flex-direction: column; min-height: 100vh; color: #f0f0f0; background: #424242; font: 8px/10px Roboto, "Liberation Sans", sans-serif; cursor: default; }
button, input, select { font: inherit; color: inherit; margin: 0; padding: 0; border: 0; background: none; border-radius: 0; }
button { display: flex; align-items: center; justify-content: center; white-space: nowrap; }
h1, h2, h3, p, ul { margin: 0; padding: 0; font: inherit; list-style: none; }
svg { display: block; flex: none; }

.titlebar { display: flex; align-items: center; height: 15px; padding: 0 0 0 1px; background: #fdfdfd; color: #333; }
.app-icon { width: 11px; height: 11px; margin-right: 3px; }
.win-controls { display: flex; margin-left: auto; padding-right: 2px; }
.win-controls button { width: 30px; height: 13px; }
.menubar { display: flex; align-items: center; gap: 9px; height: 15px; padding: 0 7px; background: #444; border-bottom: 1px solid #686868; }

.toolbar { display: flex; align-items: stretch; height: 36px; background: #444; border-bottom: 1px solid #747474; }
.tools { display: grid; grid-template-columns: 53px 56px 40px 52px 64px 55px 55px 61px 63px 39px 27px 36px 55px 34px 45px 39px; font: 7px/10px "Open Sans", sans-serif; }
.tools button { flex-direction: column; gap: 3px; }
.tools span { width: 0; display: flex; justify-content: center; }
.tools button:disabled span { color: #808080; }
.layouts { display: grid; grid-template-columns: 64px 43px 38px; grid-template-rows: 13px 13px; row-gap: 5px; align-content: start; padding-top: 2px; margin: 0 181px 0 auto; font: 7px/10px "Open Sans", sans-serif; }
.layouts .active { background: #1f6c92; }

.docks { display: flex; flex: 1; min-height: 0; }
.dock-title { display: flex; align-items: center; gap: 2px; height: 13px; padding: 0 1px 0 2px; flex: none; color: #f0f0f0; }
.dock-title h2 { flex: 1; }
.dock-title svg { color: #a0a0a0; }
.grip { display: block; flex: none; align-self: center; width: 12px; height: 2px; border-top: 1px dotted #999; border-bottom: 1px dotted #777; }
.arrow { display: block; border: 3px solid transparent; width: 0; height: 0; }
.arrow.up { border-top: 0; border-bottom: 4px solid #a5a5a5; }
.arrow.down { border-bottom: 0; border-top: 4px solid #a5a5a5; }
.arrow.prev { border-left: 0; border-right: 4px solid #a5a5a5; }
.arrow.next { border-right: 0; border-left: 4px solid #a5a5a5; }

.dock-left { display: flex; flex-direction: column; width: 272px; flex: none; }
.filter-dock { display: flex; flex-direction: column; flex: 1; }
.filter-empty { display: flex; align-items: center; justify-content: center; height: 91px; margin: 19px 7px 0; background: #2f2f2f; border: 1px solid #3a3a3a; font: 7px/10px "Open Sans", sans-serif; }
.filter-buttons { display: flex; gap: 8px; margin: 4px 7px; }
.filter-buttons div { display: flex; gap: 5px; }
.filter-buttons button { width: 15px; height: 15px; border: 1px solid #505050; background: #464646; color: #a8a8a8; }
.props-dock { margin: 2px 0 6px; }
.props-body { display: flex; justify-content: flex-end; height: 85px; margin: 0 0 0 1px; border: 1px solid #393939; border-right: 0; }
.vscroll { display: flex; flex-direction: column; align-items: center; justify-content: space-between; width: 9px; padding: 3px 0; background: #3d3d3d; border: 1px solid #505050; flex: none; }
.vscroll b { flex: 1; align-self: stretch; margin: 3px 0 12px; background: #4b4b4b; border: 1px solid #595959; }
.vscroll.short b { margin-bottom: 222px; }

.export-dock { display: flex; flex-direction: column; width: 251px; padding: 0 4px 5px 4px; flex: none; border-right: 1px solid #4e4e4e; }
.export-body { display: flex; flex: 1; min-height: 0; }
.presets { display: flex; flex-direction: column; width: 67px; flex: none; }
.presets h3 { font: 700 8px/10px Roboto, sans-serif; padding-left: 2px; white-space: nowrap; }
.presets input { width: 66px; height: 12px; background: #333; color: #ccc; appearance: none; outline: 0; padding-left: 1px; }
.presets input::placeholder { color: #8a8a8a; opacity: 1; }
.tree { display: flex; flex: 1 1 0px; min-height: 0; margin-top: 3px; overflow: hidden; }
.tree ul { width: 57px; overflow: hidden; background: #303030; margin-right: 1px; }
.tree li { display: flex; align-items: center; height: 10px; white-space: nowrap; }
.tree li:nth-child(odd) { background: #363636; }
.tree li i { width: 0; height: 0; border: 3px solid transparent; border-bottom: 0; margin: 0 6px 0 4px; }
.tree li.open i { border-top: 3px solid #b5b5b5; }
.tree li.lv1 { padding-left: 13px; }
.tree li.lv2 { padding-left: 26px; }
.preset-buttons { display: flex; gap: 7px; padding: 1px 0 0 1px; }
.preset-buttons button { width: 16px; height: 15px; border: 1px solid #585858; background: #494949; }

.export-main { display: flex; flex-direction: column; flex: 1; min-width: 0; padding-left: 1px; font: 7px/9px "Open Sans", sans-serif; }
.export-main h3 { font: 700 8px/10px Roboto, sans-serif; text-align: center; padding: 3px 0 7px 12px; }
.export-main p { white-space: nowrap; padding-left: 3px; }
.from-row { display: flex; align-items: center; gap: 4px; margin: 1px 0 0 3px; }
.select { position: relative; display: block; }
.select::after { content: ""; position: absolute; right: 4px; top: 5px; border: 3px solid transparent; border-bottom: 0; border-top: 4px solid #aaa; }
.select select { display: block; width: 49px; height: 14px; padding-left: 2px; appearance: none; border: 1px solid #606060; background: #4c4c4c; }
.hw-row { display: flex; align-items: center; margin: 2px 0 0 18px; white-space: nowrap; }
.hw-row input { appearance: none; width: 8px; height: 8px; background: #303030; margin-right: 4px; flex: none; }
.hw-row label { flex: 1; }
.hw-row button { width: 53px; height: 13px; border: 1px solid #5a5a5a; border-right: 0; background: #4b4b4b; flex: none; }
.hscroll { display: flex; align-items: center; justify-content: space-between; height: 8px; margin-top: auto; padding: 0 2px; border: 1px solid #505050; background: #3d3d3d; }
.hscroll b { flex: 1; align-self: stretch; margin: 0 15px 0 2px; background: #484848; border: 1px solid #595959; }
.export-buttons { display: grid; grid-template-columns: 60px 52px 1fr; gap: 6px; padding-top: 2px; }
.export-buttons button, .jobs-buttons button { height: 14px; border: 1px solid #585858; background: #4a4a4a; }
.export-buttons .primary { border-color: #3f7184; background: #44525a; }

.player { display: flex; flex-direction: column; flex: 1; min-width: 0; padding: 4px 0 2px; }
.frame { flex: 1; min-height: 0; position: relative; }
.frame > svg { position: absolute; inset: 0; width: 100%; height: 100%; }
.tiny { font: 14px "Open Sans", sans-serif; fill: #6a6a6a; }
.tiny .b, .tiny.b { font-size: 12px; font-weight: 700; fill: #333; }
.tiny.light { fill: #fff; }
.scrubber { position: relative; display: flex; height: 18px; margin: 5px 10px 0 10px; background: #2f2f2f; }
.mark { position: relative; flex: 86; display: flex; align-items: flex-end; justify-content: space-between; border-left: 1px solid transparent; }
.mark.tail { flex: 33; }
.mark::before { content: ""; position: absolute; left: 0; bottom: 0; height: 10px; border-left: 1px solid #ddd; }
.mark span { position: absolute; left: 2px; bottom: 1px; }
.mark i { width: 1px; height: 2px; background: #ddd; }
.mark i:nth-of-type(1) { margin-left: 25%; }
.mark i:nth-of-type(2) { height: 4px; }
.mark i:nth-of-type(3) { margin-right: 25%; }
.scrubber .end { position: absolute; right: 32px; bottom: 1px; width: 1px; height: 8px; background: #ccc; }
.scrubber .head { position: absolute; left: 5%; top: 0; }
.mark.tail::before, .mark.tail i { display: none; }
.transport { display: flex; align-items: center; justify-content: space-between; height: 27px; padding: 0 19px 0 3px; }
.time-now { display: flex; align-items: center; flex: 1; }
.time-now input { width: 53px; height: 15px; text-align: right; padding-right: 3px; background: #303030; }
.spin { display: flex; flex-direction: column; align-items: center; justify-content: center; gap: 3px; width: 9px; height: 15px; margin: 0 4px 0 2px; background: #4b4b4b; }
.transport-buttons { display: flex; align-items: center; padding-left: 38px; }
.transport-buttons button { width: 17px; height: 15px; }
.transport-buttons .slim { width: 8px; }
.time-sel { display: flex; gap: 17px; flex: 1; justify-content: flex-end; font-family: "Open Sans", sans-serif; }
.tabs { display: flex; align-items: flex-start; height: 16px; margin-bottom: 1px; flex: none; }
.tabs button { height: 16px; padding: 0 6px; border: 1px solid #4d4d4d; border-top: 0; }
.tabs .back { height: 15px; background: #3c3c3c; margin-right: 2px; }
.player .grip { align-self: flex-start; margin-left: 112px; }

.jobs-dock { display: flex; flex-direction: column; width: 103px; padding-left: 4px; flex: none; }
.jobs-list { flex: 1; background: #2f2f2f; }
.jobs-buttons { display: flex; gap: 5px; margin: 3px 0 3px; }
.jobs-buttons button { width: 17px; }
.jobs-buttons .pause { width: 52px; }
.jobs-dock .tabs { height: 19px; }

.timeline { display: flex; flex-direction: column; flex: none; }
.timeline .dock-title { height: 11px; }
.edit-bar { display: flex; align-items: center; height: 23px; padding-left: 4px; background: #444; border-top: 1px solid #656565; border-bottom: 1px solid #393939; }
.edit-group { display: flex; gap: 3px; margin-right: 8px; }
.edit-group button { width: 20px; height: 20px; }
.edit-group button:disabled { color: #8c8c8c; }
.edit-group:nth-child(3), .edit-group:nth-child(4) { margin-right: 9px; }
.edit-group .on { background: #2a7390; }
.zoom { appearance: none; width: 128px; height: 10px; margin: 0 5px 0 -1px; background: linear-gradient(90deg, #2b7fa3 43%, #353535 43%) center / 100% 2px no-repeat; outline: 0; }
.zoom::-webkit-slider-thumb { appearance: none; width: 7px; height: 8px; background: #555; border: 1px solid #777; }
.tracks { display: flex; }
.heads { width: 94px; flex: none; }
.output { display: flex; align-items: center; height: 18px; padding-left: 5px; }
.track-head { height: 67px; padding: 4px; border-right: 1px solid #e0e0c8; background: #707333; }
.track-head span { padding-left: 1px; }
.track-head div { display: flex; gap: 9px; margin-top: 10px; }
.lanes { position: relative; flex: 1; min-width: 0; }
.ruler { display: flex; align-items: flex-end; height: 18px; background: #2f2f2f; }
.ruler span { flex: 454; height: 13px; padding: 4px 0 0 2px; border-left: 1px solid #ddd; }
.ruler span:first-child { flex: 341; border: 0; padding: 0; }
.ruler span:last-child { flex: 391; }
.lane { display: flex; height: 67px; }
.clip { display: flex; flex-direction: column; border-bottom: 1px solid #123c50; border-top: 1px solid #2474a0; background: #2e9acb; min-width: 0; }
.clip.first { flex: 571; border-right: 1px solid #143040; }
.clip.second { flex: 221; }
.clip-top { display: flex; align-items: flex-start; height: 36px; background: linear-gradient(#35a5dc, #2a89b8); border-bottom: 1px solid #6fb3cf; }
.first .clip-top { justify-content: flex-end; }
.clip-top span { padding: 0 1px; background: #a9d8ee; color: #1c2c35; white-space: nowrap; font: 7px/9px "Open Sans", sans-serif; }
.thumb { width: 58px; height: 33px; background: #fcfcfc; border-top: 2px solid #fff; }
.thumb::before { content: ""; display: block; height: 2px; margin-left: 4px; background: #c9c9c9; }
.clip > svg { width: 100%; height: 30px; background: linear-gradient(#2c82ab, #256f92); }
.clip path { fill: #3096cb; stroke: #1c6488; stroke-width: 1; vector-effect: non-scaling-stroke; }
.blank { position: relative; flex: 384; background: #707333; }
.pointer { position: absolute; left: 34%; top: 12px; }
.rest { flex: 11; }
.lane-space { height: 56px; }
.lane-scroll { height: 10px; margin-right: 11px; padding: 1px 0 0 37px; background: #373737; }
.lane-scroll b { display: block; width: 41px; height: 8px; border-radius: 4px; background: #989898; }
.playhead { position: absolute; left: 80%; top: 0; }

.taskbar { display: flex; height: 27px; padding: 0; background: #fbfbfb; color: #222; flex: none; }
.taskbar button { width: 33px; padding: 0 4px; border-bottom: 2px solid transparent; }
.taskbar button svg { width: 17px; height: 17px; }
.taskbar button:nth-child(-n + 3) { width: 32px; }
.taskbar button:nth-child(-n + 4) svg { width: 12px; height: 12px; }
.taskbar button:nth-child(5) svg, .taskbar button:nth-child(6) svg, .taskbar button:nth-child(7) svg { width: 15px; height: 15px; }
.taskbar .run { border-bottom-color: #8d8468; }
.tray { display: flex; align-items: center; gap: 5px; margin-left: auto; padding-right: 14px; }
.tray time { width: 38px; text-align: center; font: 7px/12px "Open Sans", sans-serif; margin-right: 9px; }
</style>
